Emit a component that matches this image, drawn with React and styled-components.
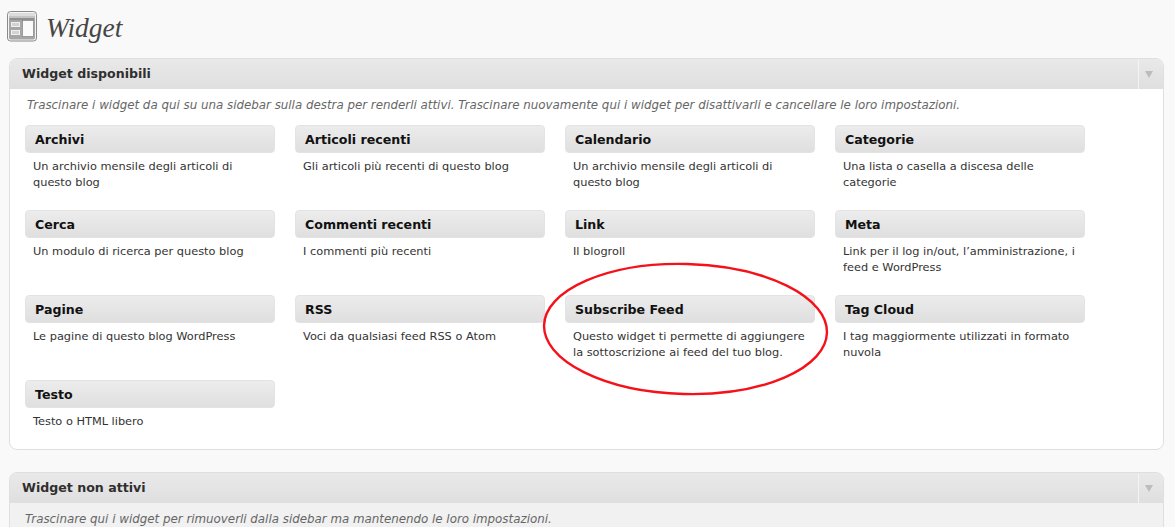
import React from 'react'
import styled, { createGlobalStyle } from 'styled-components'

const Global = createGlobalStyle`
  html, body { margin: 0; padding: 0; background: #f9f9f9; }
  body { width: 1175px; height: 527px; overflow: hidden; font-family: "DejaVu Sans", Verdana, sans-serif; }
`

const Page = styled.div`
  position: relative;
  padding: 0 11px 0 9px;
  height: 527px;
  overflow: hidden;
`
const TitleRow = styled.div`
  display: flex;
  align-items: center;
  gap: 9px;
  height: 58px;
  padding: 0 0 4px 0;
  margin-left: -2px;
  box-sizing: border-box;
`
const Title = styled.h2`
  margin: 2px 0 0;
  font: italic 400 27.5px "Liberation Serif", Georgia, serif;
  color: #464646;
`
const Panel = styled.section`
  border: 1px solid #dfdfdf;
  border-radius: 8px;
  background: ${({ $muted }) => ($muted ? '#f1f1f1' : '#fff')};
  overflow: hidden;
  margin-bottom: 22px;
  height: ${({ $height }) => $height}px;
  box-sizing: border-box;
`
const PanelHead = styled.header`
  display: flex;
  align-items: center;
  justify-content: space-between;
  height: 30px;
  padding-left: 12px;
  background: linear-gradient(#e9e9e9, #dfdfdf);
`
const PanelTitle = styled.h3`
  margin: 0 0 2px;
  font-size: 12.6px;
  font-weight: 700;
  color: #2f2f2f;
`
const Toggle = styled.div`
  display: flex;
  align-items: center;
  justify-content: center;
  box-sizing: border-box;
  width: 25px;
  height: 29px;
  padding-right: 5px;
  border-left: 1px solid #f4f4f4;
`
const Arrow = styled.span`
  width: 0;
  height: 0;
  border-left: 4.5px solid transparent;
  border-right: 4.5px solid transparent;
  border-top: 7px solid #bcbcbc;
`
const Hint = styled.p`
  margin: 0;
  padding: ${({ $left }) => `9px 0 0 ${$left}px`};
  font-size: 11.85px;
  line-height: 15px;
  font-style: italic;
  color: #666;
`
const Grid = styled.div`
  display: grid;
  grid-template-columns: repeat(4, 250px);
  grid-auto-rows: 85px;
  column-gap: 20px;
  padding: 12px 0 0 15px;
`
const Card = styled.div``
const CardHead = styled.div`
  height: 28px;
  box-sizing: border-box;
  border: 1px solid #e3e3e3;
  border-radius: 4px;
  background: linear-gradient(#ececec, #dfdfdf);
  padding-left: 9px;
  font-size: 12.6px;
  font-weight: 700;
  line-height: 27px;
  color: #111;
`
const CardText = styled.p`
  margin: 0;
  padding: 5px 8px 0;
  font-size: 11.35px;
  line-height: 16px;
  color: #333;
`
const Circle = styled.svg`
  position: absolute;
  left: 540px;
  top: 260px;
`

const widgets = [
  ['Archivi', 'Un archivio mensile degli articoli di questo blog'],
  ['Articoli recenti', 'Gli articoli più recenti di questo blog'],
  ['Calendario', 'Un archivio mensile degli articoli di questo blog'],
  ['Categorie', 'Una lista o casella a discesa delle categorie'],
  ['Cerca', 'Un modulo di ricerca per questo blog'],
  ['Commenti recenti', 'I commenti più recenti'],
  ['Link', 'Il blogroll'],
  ['Meta', 'Link per il log in/out, l’amministrazione, i feed e WordPress'],
  ['Pagine', 'Le pagine di questo blog WordPress'],
  ['RSS', 'Voci da qualsiasi feed RSS o Atom'],
  ['Subscribe Feed', 'Questo widget ti permette di aggiungere la sottoscrizione ai feed del tuo blog.'],
  ['Tag Cloud', 'I tag maggiormente utilizzati in formato nuvola'],
  ['Testo', 'Testo o HTML libero'],
]

const PageIcon = () => (
  <svg width="30" height="32" viewBox="0 0 30 32">
    <rect x="0.5" y="0.5" width="29" height="29.5" rx="3" fill="#f4f4f4" stroke="#8a8a8a" />
    <rect x="2" y="2" width="26" height="26.5" rx="2" fill="#a6a6a6" />
    <rect x="2" y="2" width="26" height="3" fill="#dcdcdc" />
    <rect x="2" y="5" width="26" height="2" fill="#c4c4c4" />
    <rect x="3" y="7" width="24" height="2" fill="#8f8f8f" />
    <rect x="15.5" y="9.5" width="11" height="16" fill="#fbfbfb" stroke="#777" strokeWidth="0.6" />
    <rect x="4.5" y="11.5" width="8" height="4" fill="#d2d2d2" stroke="#f0f0f0" />
    <rect x="4.5" y="19.5" width="8" height="4" fill="#d2d2d2" stroke="#f0f0f0" />
  </svg>
)

const App = () => (
  <Page>
    <Global />
    <TitleRow>
      <PageIcon />
      <Title>Widget</Title>
    </TitleRow>
    <Panel $height={392}>
      <PanelHead>
        <PanelTitle>Widget disponibili</PanelTitle>
        <Toggle><Arrow /></Toggle>
      </PanelHead>
      <Hint $left={17}>
        Trascinare i widget da qui su una sidebar sulla destra per renderli attivi. Trascinare nuovamente qui i widget per disattivarli e cancellare le loro impostazioni.
      </Hint>
      <Grid>
        {widgets.map(([name, text]) => (
          <Card key={name}>
            <CardHead>{name}</CardHead>
            <CardText>{text}</CardText>
          </Card>
        ))}
      </Grid>
    </Panel>
    <Panel $muted $height={80}>
      <PanelHead>
        <PanelTitle>Widget non attivi</PanelTitle>
        <Toggle><Arrow /></Toggle>
      </PanelHead>
      <Hint $left={15}>Trascinare qui i widget per rimuoverli dalla sidebar ma mantenendo le loro impostazioni.</Hint>
    </Panel>
    <Circle width="295" height="145" viewBox="0 0 295 145">
      <ellipse cx="145.5" cy="69" rx="141.5" ry="65" fill="none" stroke="#f5101a" strokeWidth="2.4" transform="rotate(1.5 145.5 69)" />
    </Circle>
  </Page>
)

export default App
